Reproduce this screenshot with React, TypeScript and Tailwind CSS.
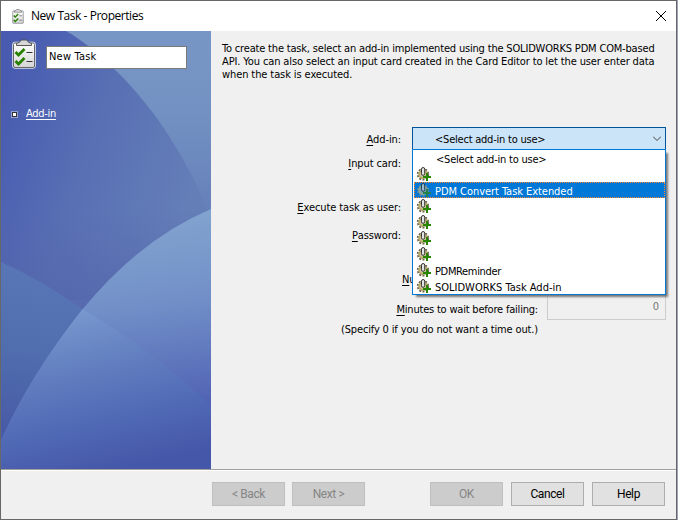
import React from "react";

function ClipboardIcon({ className }: { className: string }) {
  return (
    <svg viewBox="0 0 24 30" className={className}>
      <defs>
        <linearGradient id="paper" x1="0" y1="0" x2="0" y2="1">
          <stop offset="0" stopColor="#fff" />
          <stop offset="1" stopColor="#d4d4d4" />
        </linearGradient>
      </defs>
      <rect x=".7" y="3.2" width="22.6" height="26" rx="2" fill="url(#paper)" stroke="#d5def2" strokeWidth="1" />
      <rect x="1.5" y="4" width="21" height="24.5" rx="1.5" fill="url(#paper)" stroke="#666" strokeWidth="1" />
      <path d="M4.5 6.5v-2l3-1.2 1.8-2.3h5.4l1.8 2.3 3 1.2v2z" fill="#d8d8d8" stroke="#555" strokeWidth="1" />
      <path d="M3.5 13l3 3 6-6M3.5 22l3 3 6-6" fill="none" stroke="#278000" strokeWidth="2.8" />
      <path d="M14.5 13.5H20.500M14.500 22.500H20.500" stroke="#333" strokeWidth="1" />
    </svg>
  );
}

function GearIcon({ selected = false }: { selected?: boolean }) {
  return (
    <svg viewBox="0 0 15 14" className="h-[14px] w-[15px] shrink-0">
      <circle cx="6" cy="7.300" r="5.300" fill="none" stroke={selected ? "#5c8aa6" : "#5c5644"} strokeWidth="1.800" strokeDasharray="1.900 1.430" />
      <circle cx="6" cy="7.300" r="4" fill={selected ? "#73a1b6" : "#c9c09a"} stroke={selected ? "#8fa692" : "#b9a869"} strokeWidth="1.700" />
      <rect x="4.500" y=".5" width="3.200" height="7.800" rx="1.600" fill={selected ? "#9abed1" : "#e4e4e0"} stroke={selected ? "#253f54" : "#353535"} />
      <path d="M6 10h8M10 6v8" stroke={selected ? "#23814f" : "#278500"} strokeWidth="2" />
    </svg>
  );
}

function Backdrop() {
  return (
    <svg viewBox="1 31 210 438" className="col-start-1 row-start-1 h-[438px] w-[210px]">
      <defs>
        <linearGradient id="sky" x1="0" y1="31" x2="0" y2="230" gradientUnits="userSpaceOnUse">
          <stop offset="0" stopColor="#7896c5" />
          <stop offset=".4" stopColor="#7391c2" />
          <stop offset="1" stopColor="#637db8" />
        </linearGradient>
        <linearGradient id="deep" x1="0" y1="100" x2="200" y2="170" gradientUnits="userSpaceOnUse">
          <stop offset="0" stopColor="#485bb1" />
          <stop offset=".5" stopColor="#5971b4" />
          <stop offset="1" stopColor="#647eb8" />
        </linearGradient>
        <linearGradient id="shade" x1="0" y1="210" x2="0" y2="310" gradientUnits="userSpaceOnUse">
          <stop offset="0" stopColor="#5263aa" stopOpacity="0" />
          <stop offset="1" stopColor="#5263aa" stopOpacity=".75" />
        </linearGradient>
        <linearGradient id="left" x1="40" y1="275" x2="5" y2="430" gradientUnits="userSpaceOnUse">
          <stop offset="0" stopColor="#5876b5" />
          <stop offset=".5" stopColor="#506dae" />
          <stop offset="1" stopColor="#485ba6" />
        </linearGradient>
        <linearGradient id="dome" x1="180" y1="210" x2="205" y2="405" gradientUnits="userSpaceOnUse">
          <stop offset="0" stopColor="#82a4cf" />
          <stop offset=".45" stopColor="#7290c8" />
          <stop offset="1" stopColor="#5062b3" />
        </linearGradient>
        <linearGradient id="floor" x1="80" y1="310" x2="115" y2="470" gradientUnits="userSpaceOnUse">
          <stop offset="0" stopColor="#7898cf" />
          <stop offset=".3" stopColor="#6582c1" />
          <stop offset=".7" stopColor="#5069b5" />
          <stop offset="1" stopColor="#4557a8" />
        </linearGradient>
        <clipPath id="domeClip">
          <path d="M1 440Q31 374 82 310Q140 239 211 209V469H1z" />
        </clipPath>
      </defs>
      <path d="M1 31h210v438H1z" fill="url(#sky)" />
      <path d="M1 31H66C100 50 140 92 165 130S205 200 211 225V300H1z" fill="url(#deep)" />
      <path d="M1 210H211V320H1z" fill="url(#shade)" />
      <path d="M1 262Q40 279 82 309L110 330V469H1z" fill="url(#left)" />
      <g clipPath="url(#domeClip)">
        <path d="M1 200H211V469H1z" fill="url(#dome)" />
        <path d="M1 262Q40 279 82 309Q155 352 211 406V469H1z" fill="url(#floor)" />
      </g>
    </svg>
  );
}

function Label({ hot, rest, className }: { hot: string; rest: string; className: string }) {
  return (
    <div className={`flex items-center justify-end whitespace-pre ${className}`}>
      <span className="underline underline-offset-2">{hot}</span>{rest}
    </div>
  );
}

function Button({ children, disabled = false, className = "" }: { children: React.ReactNode; disabled?: boolean; className?: string }) {
  return (
    <button className={`h-6 w-[73px] border font-['Roboto',sans-serif] text-[12px] leading-none tracking-[-0.4px] [font-stretch:normal] ${disabled ? "border-[#bfbfbf] bg-[#ccc] text-[#858585]" : "border-[#adadad] bg-[#e1e1e1] text-black"} ${className}`}>
      {children}
    </button>
  );
}

const addIns = [
  { name: "", spacing: "" },
  { name: "PDM Convert Task Extended", spacing: "tracking-[-0.05px]" },
  { name: "", spacing: "" },
  { name: "", spacing: "" },
  { name: "", spacing: "" },
  { name: "", spacing: "" },
  { name: "PDMReminder", spacing: "tracking-[-0.35px]" },
  { name: "SOLIDWORKS Task Add-in", spacing: "tracking-[0px]" },
];

function AddInMenu() {
  return (
    <div className="absolute left-0 top-[22px] h-[146px] w-[254px] border border-[#0078d7] bg-white pl-px shadow-[3px_3px_2px_-1px_#777]">
      <div className="flex h-4 items-center pl-[22px] pt-[3px] leading-none tracking-[-0.22px]">&lt;Select add-in to use&gt;</div>
      {addIns.map(({ name, spacing }, i) => (
        <div key={i} className={`flex h-4 items-center gap-[3px] whitespace-nowrap pl-[3px] ${i === 1 ? "bg-[#0078d7] text-white outline-1 -outline-offset-1 outline-dotted outline-[#ff872b]" : ""}`}>
          <GearIcon selected={i === 1} />
          <span className={`pt-[3px] leading-none ${spacing}`}>{name}</span>
        </div>
      ))}
    </div>
  );
}

export default function App() {
  return (
    <div className="h-[520px] w-[678px] bg-[#9ba3b5] pr-px font-['DejaVu_Sans_Condensed','DejaVu_Sans',sans-serif] text-[11px] leading-[13px] tracking-[-0.1px] text-black [font-stretch:condensed]">
      <div className="flex h-[520px] w-[677px] flex-col border border-[#676767] bg-[#f0f0f0]">
        <header className="flex h-[30px] shrink-0 items-center bg-white pl-[11px] pr-[10px]">
          <ClipboardIcon className="h-[15px] w-3" />
          <h1 className="-mt-px ml-[7px] whitespace-nowrap font-['Open_Sans',sans-serif] text-[12px] tracking-[-0.45px] [font-stretch:normal]">New Task - Properties</h1>
          <svg viewBox="0 0 10 10" className="ml-auto h-[10px] w-[10px]"><path d="M0 0l10 10M10 0L0 10" stroke="#000" strokeWidth="1" /></svg>
        </header>
        <div className="flex h-[438px] shrink-0">
          <aside className="grid w-[210px] shrink-0">
            <Backdrop />
            <div className="z-10 col-start-1 row-start-1 pl-[11px] pt-2">
              <div className="flex">
                <ClipboardIcon className="h-[30px] w-6" />
                <div className="ml-[10px] mt-[7px] flex h-[23px] w-[141px] items-center border border-[#7a7a7a] bg-white pl-[2px] pb-[3px] tracking-[0.2px]">New Task</div>
              </div>
              <div className="mt-[38px] flex items-center text-white">
                <div className="mt-px h-[5px] w-[5px] border border-[#333] bg-white outline-1 outline-[#91a0cf]" />
                <a className="ml-[9px] tracking-[-0.3px] underline underline-offset-2">Add-in</a>
              </div>
            </div>
          </aside>
          <main className="w-[465px] pl-[11px] pt-[11px]">
            <p className="whitespace-nowrap">
              <span className="tracking-[-0.18px]">To create the task, select an add-in implemented using the SOLIDWORKS PDM COM-based</span><br />
              <span className="tracking-[-0.12px]">API. You can also select an input card created in the Card Editor to let the user enter data</span><br />
              when the task is executed.
            </p>
            <section className="pt-[46px]">
              <div className="flex">
                <Label hot="A" rest="dd-in:" className="h-[24px] w-[179px]" />
                <div className="relative ml-[11px] h-[23px] w-[254px]">
                  <div className="flex h-[23px] items-center border border-[#005499] bg-[#cce4f7] pl-[22px] pr-[4px]">
                    <span className="pt-px tracking-[-0.22px]">&lt;Select add-in to use&gt;</span>
                    <svg viewBox="0 0 8 5" className="ml-auto h-[5px] w-2"><path d="M0 .5L4 4.500L8 .5" fill="none" stroke="#454545" /></svg>
                  </div>
                  <AddInMenu />
                </div>
              </div>
              <Label hot="I" rest="nput card:" className="mt-[5px] h-[14px] w-[179px]" />
              <Label hot="E" rest="xecute task as user:" className="mt-[30px] h-[14px] w-[179px]" />
              <Label hot="P" rest="assword:" className="mt-[14px] h-[14px] w-[179px]" />
              <div className="ml-[180px] mt-[31px] h-[14px] w-[16px]">
                <span className="underline underline-offset-2">N</span>u
              </div>
              <div className="mt-[7px] flex h-[27px]">
                <Label hot="M" rest="inutes to wait before failing:" className="mt-[8px] h-[14px] w-[316px] tracking-[-0.2px]" />
                <div className="ml-[9px] flex h-[26px] w-[119px] items-center justify-end border border-[#ccc] pb-px pr-[6px] text-[#777]">0</div>
              </div>
              <div className="mt-[2px] w-[316px] text-right tracking-[-0.15px]">(Specify 0 if you do not want a time out.)</div>
            </section>
          </main>
        </div>
        <footer className="flex h-[50px] border-t border-[#a0a0a0] pl-[211px] pt-[12px] shadow-[inset_0_1px_0_#fff]">
          <Button disabled>&lt; Back</Button>
          <Button disabled className="ml-[7px]">Next &gt;</Button>
          <Button disabled className="ml-[65px]">OK</Button>
          <Button className="ml-2">Cancel</Button>
          <Button className="ml-2">Help</Button>
        </footer>
      </div>
    </div>
  );
}
